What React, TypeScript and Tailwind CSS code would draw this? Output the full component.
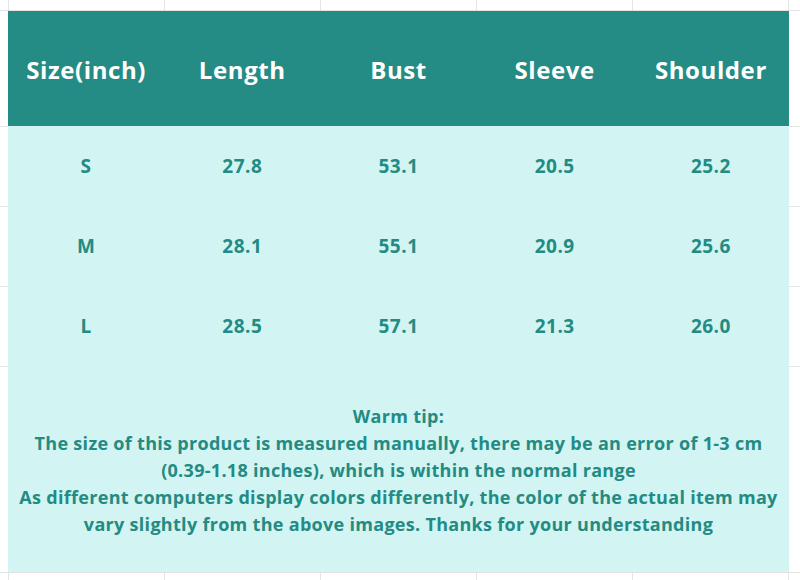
const headers = ['Size(inch)', 'Length', 'Bust', 'Sleeve', 'Shoulder']

const rows = [
  ['S', '27.8', '53.1', '20.5', '25.2'],
  ['M', '28.1', '55.1', '20.9', '25.6'],
  ['L', '28.5', '57.1', '21.3', '26.0'],
]

export default function App() {
  return (
    <div
      className="w-[800px] h-[580px] overflow-hidden bg-white pt-[11px] pl-[8px] bg-no-repeat [background-image:linear-gradient(#e3e3e3,#e3e3e3),linear-gradient(#e3e3e3,#e3e3e3),linear-gradient(#e3e3e3,#e3e3e3),linear-gradient(#e3e3e3,#e3e3e3),linear-gradient(#e3e3e3,#e3e3e3),linear-gradient(#e3e3e3,#e3e3e3),repeating-linear-gradient(to_right,#e3e3e3_0_1px,transparent_1px_156px)] [background-size:100%_1px,100%_1px,100%_1px,100%_1px,100%_1px,100%_1px,100%_100%] [background-position:0_10px,0_126px,0_206px,0_286px,0_366px,0_572px,8px_0]"
      style={{ fontFamily: '"Open Sans", "Noto Sans", sans-serif' }}
    >
      <div className="w-[781px] bg-[#d2f4f2]">
        {/* header */}
        <div className="h-[115px] bg-[#248c84] grid grid-cols-5 items-center">
          {headers.map((h) => (
            <div key={h} className="text-center text-white font-bold text-[24px] tracking-[0.6px] pt-[2px]">
              {h}
            </div>
          ))}
        </div>

        {/* rows */}
        {rows.map((r) => (
          <div key={r[0]} className="h-[80px] grid grid-cols-5 items-center">
            {r.map((v, i) => (
              <div key={i} className="text-center text-[#238b83] font-bold text-[19px] tracking-[0.5px]">
                {v}
              </div>
            ))}
          </div>
        ))}

        {/* tip */}
        <div className="h-[206px] flex flex-col items-center justify-center text-center text-[#238b83] font-bold text-[18px] tracking-[0.3px] leading-[27px] pt-[2px]">
          <div>Warm tip:</div>
          <div>The size of this product is measured manually, there may be an error of 1-3 cm</div>
          <div>(0.39-1.18 inches), which is within the normal range</div>
          <div>As different computers display colors differently, the color of the actual item may</div>
          <div>vary slightly from the above images. Thanks for your understanding</div>
        </div>
      </div>
    </div>
  )
}
